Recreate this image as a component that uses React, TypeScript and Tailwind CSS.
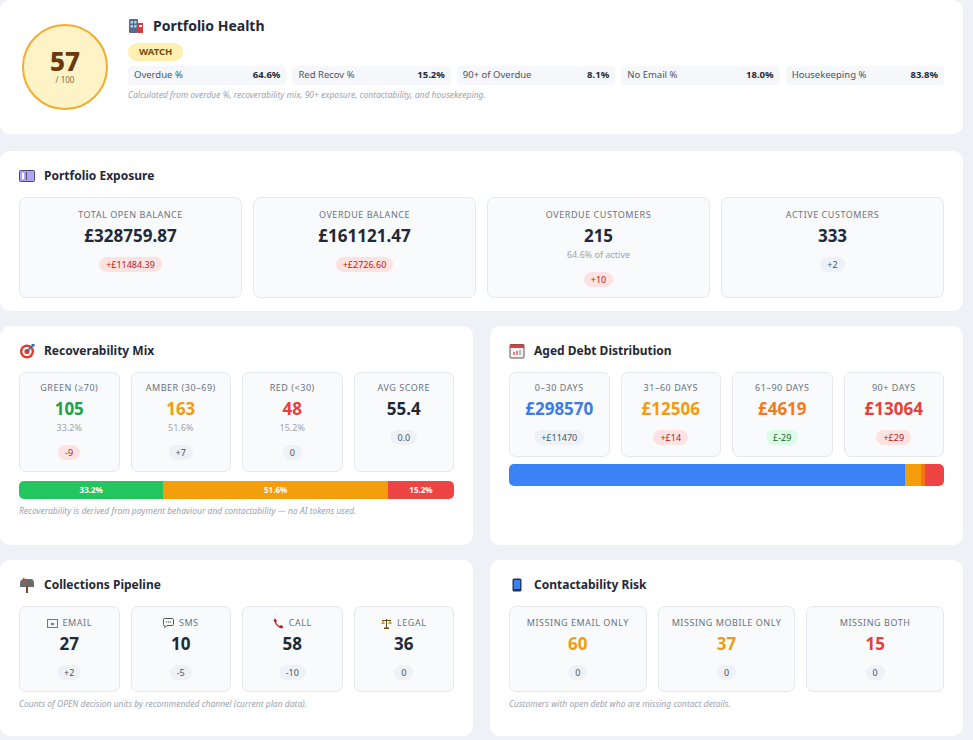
import React from 'react';

type Tone = 'red' | 'green' | 'gray';

const badgeTone: Record<Tone, string> = {
  red: 'bg-[#fde2e2] text-[#b42318]',
  green: 'bg-[#dcfce7] text-[#166534]',
  gray: 'bg-[#eef1f6] text-[#4b5563]',
};

const Badge = ({ text, tone = 'gray' }: { text: string; tone?: Tone }) => (
  <span className={`inline-block rounded-full px-[7px] py-[2px] text-[9px] leading-[11px] ${badgeTone[tone]}`}>{text}</span>
);

const Card = ({ children, className = '' }: { children: React.ReactNode; className?: string }) => (
  <div className={`rounded-[10px] bg-white px-[19px] ${className}`}>{children}</div>
);

const Title = ({ icon, text, big = false }: { icon: React.ReactNode; text: string; big?: boolean }) => (
  <div className={`flex items-center gap-[9px] font-bold text-[#1f2937] ${big ? 'text-[14px]' : 'text-[12px]'}`}>
    <span className="flex h-4 w-4 items-center justify-center">{icon}</span>
    {text}
  </div>
);

const Tile = ({
  label,
  value,
  valueClass = 'text-[#1f2937]',
  sub,
  badge,
  className = '',
}: {
  label: React.ReactNode;
  value: string;
  valueClass?: string;
  sub?: string;
  badge?: { text: string; tone?: Tone };
  className?: string;
}) => (
  <div className={`flex flex-col items-center rounded-[7px] border border-[#e5e8ee] bg-[#f8fafc] ${className}`}>
    <div className="flex items-center gap-[5px] text-[9px] uppercase leading-[12px] tracking-[0.06em] text-[#6b7280]">{label}</div>
    <div className={`mt-[5px] text-[17px] font-bold leading-[20px] ${valueClass}`}>{value}</div>
    {sub && <div className="mt-[3px] text-[9px] leading-[12px] text-[#9ca3af]">{sub}</div>}
    {badge && (
      <div className="mt-[4px]">
        <Badge text={badge.text} tone={badge.tone} />
      </div>
    )}
  </div>
);

const Metric = ({ label, value }: { label: string; value: string }) => (
  <div className="flex flex-1 items-center justify-between rounded-[4px] bg-[#f5f7fa] px-[6px] py-[2px] text-[9.5px]">
    <span className="text-[#4b5563]">{label}</span>
    <span className="font-bold text-[#1f2937]">{value}</span>
  </div>
);

const HealthIcon = () => (
  <svg width="16" height="16" viewBox="0 0 16 16">
    <rect x="1" y="1" width="9" height="14" rx="1" fill="#5b6b86" />
    <rect x="2.5" y="3" width="2.5" height="2.5" fill="#9fd4f0" />
    <rect x="6" y="3" width="2.5" height="2.5" fill="#9fd4f0" />
    <rect x="2.5" y="7" width="2.5" height="2.5" fill="#9fd4f0" />
    <rect x="6" y="7" width="2.5" height="2.5" fill="#9fd4f0" />
    <rect x="10" y="5" width="5" height="10" fill="#d63a3a" />
    <rect x="11" y="7" width="3" height="2" fill="#fff" />
  </svg>
);

const ExposureIcon = () => (
  <svg width="16" height="14" viewBox="0 0 16 14">
    <rect x="0.5" y="1.5" width="15" height="11" rx="1" fill="#b3a4f0" stroke="#4b4b6b" />
    <rect x="3" y="4" width="2" height="6" fill="#fff" />
    <rect x="7" y="3" width="1" height="8" fill="#4b4b6b" />
  </svg>
);

const TargetIcon = () => (
  <svg width="16" height="16" viewBox="0 0 16 16">
    <circle cx="8" cy="8.5" r="7" fill="#e23b2e" />
    <circle cx="8" cy="8.5" r="4.6" fill="#fff" />
    <circle cx="8" cy="8.5" r="2.6" fill="#e23b2e" />
    <path d="M8 8.5 L14 2" stroke="#2b6cb0" strokeWidth="1.6" />
    <path d="M12.5 1.5 L15 1.5 L14.5 4" fill="none" stroke="#2b6cb0" strokeWidth="1.2" />
  </svg>
);

const CalendarIcon = () => (
  <svg width="16" height="16" viewBox="0 0 16 16">
    <rect x="1" y="1.5" width="14" height="13.5" rx="1" fill="#f3f3f3" stroke="#555" />
    <rect x="1" y="1.5" width="14" height="3.5" fill="#d9443a" />
    <rect x="4" y="9" width="2" height="3" fill="#d98a80" />
    <rect x="7" y="8" width="2" height="4" fill="#d98a80" />
    <rect x="10" y="7" width="2" height="5" fill="#bbb" />
  </svg>
);

const MailboxIcon = () => (
  <svg width="16" height="16" viewBox="0 0 16 16">
    <path d="M1 7 Q1 2 5 2 L12 2 Q15 2 15 7 L15 10 L1 10 Z" fill="#6b6b6b" />
    <rect x="7" y="9" width="2" height="7" fill="#7a4a1e" />
    <rect x="4" y="1" width="1.5" height="5" fill="#e23b2e" />
  </svg>
);

const PhoneIcon = () => (
  <svg width="10" height="14" viewBox="0 0 10 14">
    <rect x="0.5" y="0.5" width="9" height="13" rx="1.5" fill="#263248" />
    <rect x="1.8" y="2" width="6.4" height="9" fill="#3b82f6" />
  </svg>
);

const EmailGlyph = () => (
  <svg width="11" height="9" viewBox="0 0 11 9">
    <rect x="0.5" y="0.5" width="10" height="8" fill="#f3f4f6" stroke="#777" />
    <rect x="4" y="4" width="3" height="2" fill="#777" />
  </svg>
);

const SmsGlyph = () => (
  <svg width="11" height="10" viewBox="0 0 11 10">
    <path d="M1.5 0.5 H9.5 Q10.5 0.5 10.5 1.5 V6.5 Q10.5 7.5 9.5 7.5 H4 L2 9.5 V7.5 H1.5 Q0.5 7.5 0.5 6.5 V1.5 Q0.5 0.5 1.5 0.5Z" fill="#fff" stroke="#555" />
    <circle cx="3.5" cy="4" r="0.7" fill="#555" />
    <circle cx="5.5" cy="4" r="0.7" fill="#555" />
    <circle cx="7.5" cy="4" r="0.7" fill="#555" />
  </svg>
);

const CallGlyph = () => (
  <svg width="11" height="11" viewBox="0 0 11 11">
    <path d="M2 0.5 L4 3 L3 4.5 Q4.5 7 6.5 8 L8 7 L10.5 9 L9 10.5 Q4 10 0.5 2 Z" fill="#b91c1c" />
  </svg>
);

const LegalGlyph = () => (
  <svg width="11" height="11" viewBox="0 0 11 11">
    <rect x="5" y="1" width="1" height="9" fill="#6b4a12" />
    <rect x="1" y="2" width="9" height="1" fill="#6b4a12" />
    <path d="M0 6 L2 2.5 L4 6 Z" fill="#d4a017" />
    <path d="M7 6 L9 2.5 L11 6 Z" fill="#d4a017" />
    <rect x="3" y="9.5" width="5" height="1.5" fill="#6b4a12" />
  </svg>
);

const Note = ({ children, className = '' }: { children: React.ReactNode; className?: string }) => (
  <div className={`text-[8.5px] italic text-[#9ca3af] ${className}`}>{children}</div>
);

export default function App() {
  return (
    <div className="min-h-[740px] w-[973px] bg-[#eef1f5] pr-[10px]" style={{ fontFamily: '"Noto Sans", "Open Sans", sans-serif' }}>
      {/* Portfolio health */}
      <Card className="flex h-[134px] gap-[20px] !pl-[22px] pt-[24px]">
        <div className="flex h-[86px] w-[86px] shrink-0 flex-col items-center justify-center rounded-full border-2 border-[#f0ad2e] bg-[#fef3c7]">
          <div className="text-[26px] font-extrabold leading-[24px] text-[#6b3a0c]">57</div>
          <div className="mt-[2px] text-[8px] leading-[10px] text-[#8a6a3a]">/ 100</div>
        </div>
        <div className="flex flex-1 flex-col">
          <div className="-mt-[9px]">
            <Title big icon={<HealthIcon />} text="Portfolio Health" />
          </div>
          <div className="mt-[1px]">
            <span className="inline-block rounded-full bg-[#fdf0b0] px-[11px] py-[2px] text-[9.5px] font-bold text-[#7a4a0c]">WATCH</span>
          </div>
          <div className="mt-[5px] flex gap-[6px]">
            <Metric label="Overdue %" value="64.6%" />
            <Metric label="Red Recov %" value="15.2%" />
            <Metric label="90+ of Overdue" value="8.1%" />
            <Metric label="No Email %" value="18.0%" />
            <Metric label="Housekeeping %" value="83.8%" />
          </div>
          <Note className="mt-[4px]">Calculated from overdue %, recoverability mix, 90+ exposure, contactability, and housekeeping.</Note>
        </div>
      </Card>

      {/* Exposure */}
      <Card className="mt-[17px] h-[160px] pt-[16px]">
        <Title icon={<ExposureIcon />} text="Portfolio Exposure" />
        <div className="mt-[12px] grid grid-cols-4 gap-[11px]">
          <Tile className="h-[101px] pt-[11px]" label="Total Open Balance" value="£328759.87" badge={{ text: '+£11484.39', tone: 'red' }} />
          <Tile className="h-[101px] pt-[11px]" label="Overdue Balance" value="£161121.47" badge={{ text: '+£2726.60', tone: 'red' }} />
          <Tile className="h-[101px] pt-[11px]" label="Overdue Customers" value="215" sub="64.6% of active" badge={{ text: '+10', tone: 'red' }} />
          <Tile className="h-[101px] pt-[11px]" label="Active Customers" value="333" badge={{ text: '+2' }} />
        </div>
      </Card>

      <div className="mt-[15px] grid grid-cols-2 gap-[17px]">
        {/* Recoverability */}
        <Card className="h-[219px] pt-[16px]">
          <Title icon={<TargetIcon />} text="Recoverability Mix" />
          <div className="mt-[12px] grid grid-cols-4 gap-[11px]">
            <Tile className="h-[100px] pt-[9px]" label="Green (≥70)" value="105" valueClass="text-[#22a049]" sub="33.2%" badge={{ text: '-9', tone: 'red' }} />
            <Tile className="h-[100px] pt-[9px]" label="Amber (30–69)" value="163" valueClass="text-[#f29b11]" sub="51.6%" badge={{ text: '+7' }} />
            <Tile className="h-[100px] pt-[9px]" label="Red (<30)" value="48" valueClass="text-[#e5403a]" sub="15.2%" badge={{ text: '0' }} />
            <Tile className="h-[100px] pt-[9px]" label="Avg Score" value="55.4" badge={{ text: '0.0' }} />
          </div>
          <div className="mt-[9px] flex h-[18px] overflow-hidden rounded-[5px] text-[8px] font-bold leading-[18px] text-white">
            <div className="bg-[#22c55e] text-center" style={{ width: '33.2%' }}>33.2%</div>
            <div className="bg-[#f59e0b] text-center" style={{ width: '51.6%' }}>51.6%</div>
            <div className="bg-[#ef4444] text-center" style={{ width: '15.2%' }}>15.2%</div>
          </div>
          <Note className="mt-[6px]">Recoverability is derived from payment behaviour and contactability — no AI tokens used.</Note>
        </Card>

        {/* Aged debt */}
        <Card className="h-[219px] pt-[16px]">
          <Title icon={<CalendarIcon />} text="Aged Debt Distribution" />
          <div className="mt-[12px] grid grid-cols-4 gap-[11px]">
            <Tile className="h-[85px] pt-[9px]" label="0–30 Days" value="£298570" valueClass="text-[#3b7de0]" badge={{ text: '+£11470' }} />
            <Tile className="h-[85px] pt-[9px]" label="31–60 Days" value="£12506" valueClass="text-[#f29b11]" badge={{ text: '+£14', tone: 'red' }} />
            <Tile className="h-[85px] pt-[9px]" label="61–90 Days" value="£4619" valueClass="text-[#f07a1e]" badge={{ text: '£-29', tone: 'green' }} />
            <Tile className="h-[85px] pt-[9px]" label="90+ Days" value="£13064" valueClass="text-[#e5403a]" badge={{ text: '+£29', tone: 'red' }} />
          </div>
          <div className="mt-[7px] flex h-[22px] overflow-hidden rounded-[5px]">
            <div className="bg-[#3b82f6]" style={{ width: '91%' }} />
            <div className="bg-[#f59e0b]" style={{ width: '3.8%' }} />
            <div className="bg-[#f97316]" style={{ width: '0.8%' }} />
            <div className="bg-[#ef4444]" style={{ width: '4.4%' }} />
          </div>
        </Card>
      </div>

      <div className="mt-[15px] grid grid-cols-2 gap-[17px]">
        {/* Pipeline */}
        <Card className="h-[176px] pt-[16px]">
          <Title icon={<MailboxIcon />} text="Collections Pipeline" />
          <div className="mt-[12px] grid grid-cols-4 gap-[11px]">
            <Tile className="h-[86px] pt-[10px]" label={<><EmailGlyph />Email</>} value="27" badge={{ text: '+2' }} />
            <Tile className="h-[86px] pt-[10px]" label={<><SmsGlyph />SMS</>} value="10" badge={{ text: '-5' }} />
            <Tile className="h-[86px] pt-[10px]" label={<><CallGlyph />Call</>} value="58" badge={{ text: '-10' }} />
            <Tile className="h-[86px] pt-[10px]" label={<><LegalGlyph />Legal</>} value="36" badge={{ text: '0' }} />
          </div>
          <Note className="mt-[6px]">Counts of OPEN decision units by recommended channel (current plan data).</Note>
        </Card>

        {/* Contactability */}
        <Card className="h-[176px] pt-[16px]">
          <Title icon={<PhoneIcon />} text="Contactability Risk" />
          <div className="mt-[12px] grid grid-cols-3 gap-[11px]">
            <Tile className="h-[86px] pt-[10px]" label="Missing Email Only" value="60" valueClass="text-[#f29b11]" badge={{ text: '0' }} />
            <Tile className="h-[86px] pt-[10px]" label="Missing Mobile Only" value="37" valueClass="text-[#f29b11]" badge={{ text: '0' }} />
            <Tile className="h-[86px] pt-[10px]" label="Missing Both" value="15" valueClass="text-[#e5403a]" badge={{ text: '0' }} />
          </div>
          <Note className="mt-[6px]">Customers with open debt who are missing contact details.</Note>
        </Card>
      </div>
    </div>
  );
}
